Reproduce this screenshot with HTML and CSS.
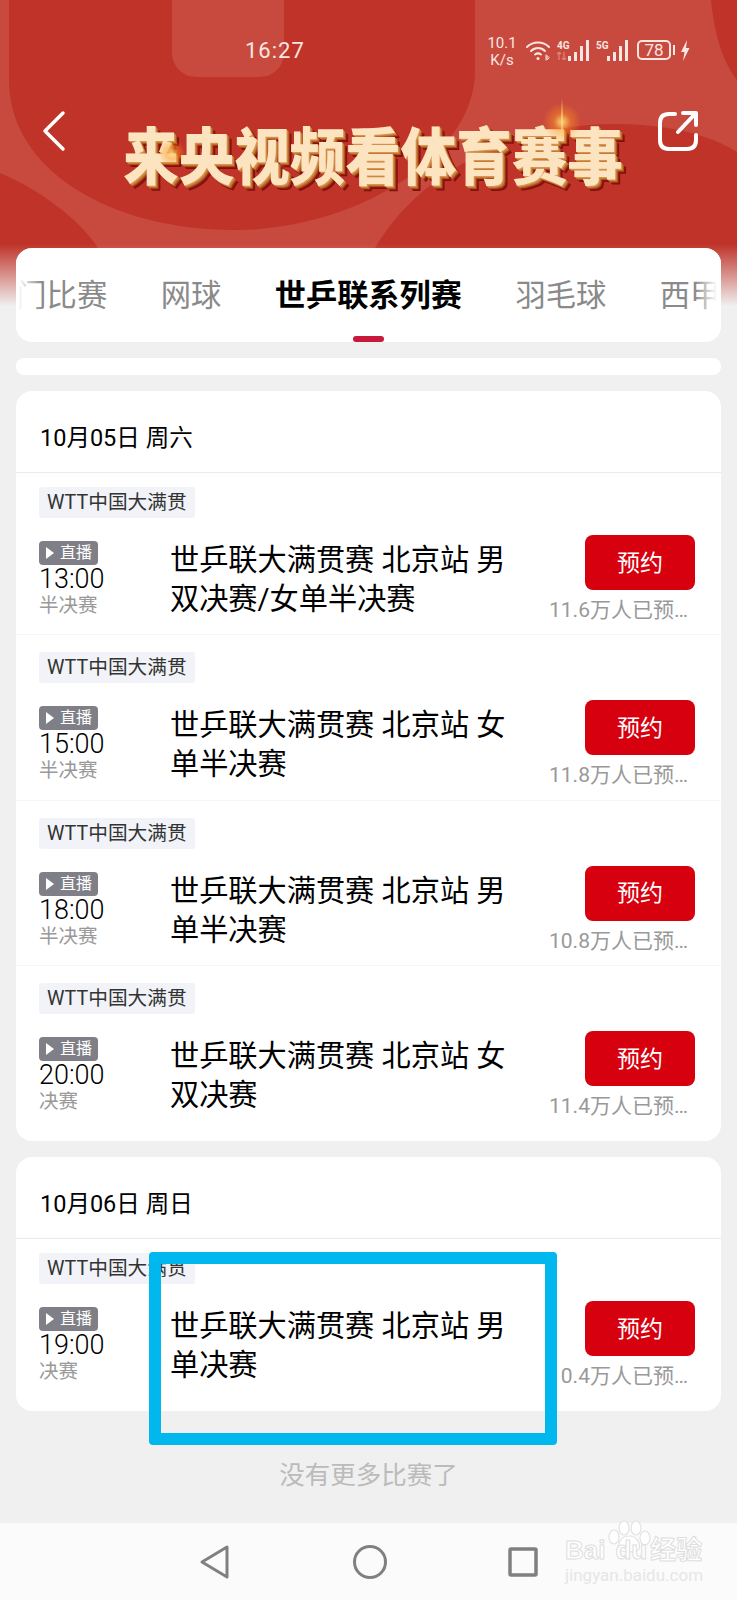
FILE: index.html
```html
<!DOCTYPE html>
<html lang="zh-CN">
<head>
    <meta charset="UTF-8">
    <meta name="viewport" content="width=device-width, initial-scale=1.0">
    <title>来央视频看体育赛事</title>
    <link rel="stylesheet" href="styles.css">
</head>
<body>

<header class="hero">
    <svg class="hero-bg" viewBox="0 0 737 306" preserveAspectRatio="none">
        <rect width="737" height="306" fill="#c8493e"/>
        <path d="M9 0V80C9 170 110 230 235 230C350 230 475 160 475 70V0Z" fill="#bf3329"/>
        <path d="M0 173C40 190 80 220 98 248V306H0Z" fill="#bf3329"/>
        <path d="M375 248C420 170 520 122 620 124C670 125 710 135 737 152V306H375Z" fill="#bf3329"/>
        <path d="M711 0C715 40 725 65 737 80V0Z" fill="#bf3329"/>
        <rect x="172" y="-30" width="112" height="107" rx="24" fill="#c8493e"/>
    </svg>
    <div class="hero-fade"></div>

    <div class="status-bar">
        <span class="clock">16:27</span>
        <div class="speed">10.1<br>K/s</div>
        <svg class="ic-wifi" width="25" height="21" viewBox="0 0 25 21" fill="none" stroke="#f8e6e2" stroke-width="2" stroke-linecap="round">
            <path d="M1 7C7 1 17 1 23 7"/>
            <path d="M5 11C9 7 15 7 19 11"/>
            <path d="M9 14.500C11 13 13 13 15 14.500"/>
            <circle cx="12" cy="18.500" r="1.500" fill="#f8e6e2" stroke="none"/>
            <path d="M20 15V20M23 17.500L21 15.500V19.500Z" stroke-width="1"/>
        </svg>
        <div class="net">
            <div class="net-type">
                <span class="net-label">4G</span>
                <svg class="net-arrows" width="10" height="8" viewBox="0 0 10 8" fill="none" stroke="#f8e6e2" stroke-width="1.200"><path d="M2 0V8M0 2L2 0L4 2M7 0V8M5 6L7 8L9 6"/></svg>
            </div>
            <svg width="22" height="21" viewBox="0 0 22 21" fill="#f8e6e2"><rect x="0" y="16" width="3" height="5"/><rect x="6" y="12" width="3" height="9"/><rect x="12" y="6" width="3" height="15"/><rect x="18" y="0" width="3" height="21"/></svg>
        </div>
        <div class="net">
            <div class="net-type">
                <span class="net-label">5G</span>
            </div>
            <svg width="22" height="21" viewBox="0 0 22 21" fill="#f8e6e2"><rect x="0" y="16" width="3" height="5"/><rect x="6" y="12" width="3" height="9"/><rect x="12" y="6" width="3" height="15"/><rect x="18" y="0" width="3" height="21"/></svg>
        </div>
        <div class="battery">78</div>
        <span class="battery-cap"></span>
        <svg width="10" height="21" viewBox="0 0 10 21" fill="#f8e6e2"><path d="M7 0L1 12H4.500L3 21L9.500 8H6Z"/></svg>
    </div>

    <div class="title-bar">
        <svg class="ic-back" width="26" height="42" viewBox="0 0 26 42" fill="none" stroke="#fff" stroke-width="3.500" stroke-linecap="round" stroke-linejoin="round"><path d="M22 3L4 21L22 39"/></svg>
        <h1 class="banner">来央视频看体育赛事</h1>
        <svg class="ic-share" width="42" height="42" viewBox="0 0 42 42" fill="none" stroke="#fff" stroke-width="4" stroke-linecap="round" stroke-linejoin="round">
            <path d="M18 4H12C6 4 3 7 3 13V30C3 36 6 39 12 39H30C36 39 39 36 39 30V25"/>
            <path d="M21 22L38 4M26 3H39V15"/>
        </svg>
    </div>
    <span class="glint glint-a"></span>
    <span class="glint glint-b"></span>
</header>

<nav class="tabs">
    <div class="tab-strip">
        <span class="tab">热门比赛</span>
        <span class="tab">网球</span>
        <span class="tab tab-active">世乒联系列赛</span>
        <span class="tab">羽毛球</span>
        <span class="tab">西甲联赛</span>
    </div>
    <span class="tab-mark"></span>
</nav>

<div class="card card-stub"></div>

<section class="card">
    <div class="day">10月05日 周六</div>

    <div class="match">
        <span class="tag">WTT中国大满贯</span>
        <div class="match-body">
            <div class="when">
                <span class="live"><i class="live-arrow"></i>直播</span>
                <span class="time">13:00</span>
                <span class="stage">半决赛</span>
            </div>
            <div class="match-title">世乒联大满贯赛 北京站 男双决赛/女单半决赛</div>
            <div class="action">
                <button class="book">预约</button>
                <span class="count">11.6万人已预约</span>
            </div>
        </div>
    </div>

    <div class="match">
        <span class="tag">WTT中国大满贯</span>
        <div class="match-body">
            <div class="when">
                <span class="live"><i class="live-arrow"></i>直播</span>
                <span class="time">15:00</span>
                <span class="stage">半决赛</span>
            </div>
            <div class="match-title">世乒联大满贯赛 北京站 女单半决赛</div>
            <div class="action">
                <button class="book">预约</button>
                <span class="count">11.8万人已预约</span>
            </div>
        </div>
    </div>

    <div class="match">
        <span class="tag">WTT中国大满贯</span>
        <div class="match-body">
            <div class="when">
                <span class="live"><i class="live-arrow"></i>直播</span>
                <span class="time">18:00</span>
                <span class="stage">半决赛</span>
            </div>
            <div class="match-title">世乒联大满贯赛 北京站 男单半决赛</div>
            <div class="action">
                <button class="book">预约</button>
                <span class="count">10.8万人已预约</span>
            </div>
        </div>
    </div>

    <div class="match match-last">
        <span class="tag">WTT中国大满贯</span>
        <div class="match-body">
            <div class="when">
                <span class="live"><i class="live-arrow"></i>直播</span>
                <span class="time">20:00</span>
                <span class="stage">决赛</span>
            </div>
            <div class="match-title">世乒联大满贯赛 北京站 女双决赛</div>
            <div class="action">
                <button class="book">预约</button>
                <span class="count">11.4万人已预约</span>
            </div>
        </div>
    </div>
</section>

<section class="card">
    <div class="day">10月06日 周日</div>

    <div class="match match-last">
        <span class="tag">WTT中国大满贯</span>
        <div class="match-body">
            <div class="when">
                <span class="live"><i class="live-arrow"></i>直播</span>
                <span class="time">19:00</span>
                <span class="stage">决赛</span>
            </div>
            <div class="match-title">世乒联大满贯赛 北京站 男单决赛</div>
            <div class="action">
                <button class="book">预约</button>
                <span class="count">10.4万人已预约</span>
            </div>
        </div>
    </div>
</section>

<p class="no-more">没有更多比赛了</p>

<footer class="nav-bar">
    <svg class="nav-back" width="32" height="36" viewBox="0 0 32 36" fill="none" stroke="#808080" stroke-width="3" stroke-linejoin="round"><path d="M28 3V33L3 18Z"/></svg>
    <svg width="36" height="36" viewBox="0 0 36 36" fill="none" stroke="#808080" stroke-width="3"><circle cx="18" cy="18" r="15.500"/></svg>
    <svg width="32" height="32" viewBox="0 0 32 32" fill="none" stroke="#808080" stroke-width="3.500" stroke-linejoin="round"><rect x="3" y="3" width="26" height="26" rx="1"/></svg>
</footer>

<!-- annotation drawn over the screenshot -->
<div class="highlight"></div>

<div class="watermark">
    <svg class="paw" width="46" height="34" viewBox="0 0 46 34" fill="#fff" stroke="#e2e2e2" stroke-width="1.200">
        <ellipse cx="8" cy="17" rx="5" ry="7"/>
        <ellipse cx="18" cy="8" rx="5" ry="7"/>
        <ellipse cx="30" cy="8" rx="5" ry="7"/>
        <ellipse cx="39" cy="18" rx="5" ry="7"/>
        <path d="M23 16C31 16 35 24 33 29C30 33 16 33 13 29C11 24 15 16 23 16Z"/>
    </svg>
    <div class="wm-name">Bai<span class="wm-du">du</span>经验</div>
    <div class="wm-url">jingyan.baidu.com</div>
</div>

</body>
</html>
```

FILE: styles.css
```css
* {
    box-sizing: border-box;
}

body {
    position: relative;
    display: flex;
    flex-direction: column;
    width: 737px;
    height: 1600px;
    margin: 0;
    overflow: hidden;
    background-color: #f0f0f0;
    color: #000;
    font-family: Roboto, "Noto Sans CJK SC", sans-serif;
}

/* header */
.hero {
    position: relative;
    height: 306px;
    margin-bottom: -58px;
    flex-shrink: 0;
    overflow: hidden;
}

.hero-bg {
    position: absolute;
    top: 0;
    left: 0;
    width: 737px;
    height: 306px;
}

.hero-fade {
    position: absolute;
    left: 0;
    right: 0;
    bottom: 0;
    height: 62px;
    background: linear-gradient(rgba(240, 240, 240, 0), #f0f0f0);
}

.status-bar {
    position: relative;
    display: flex;
    align-items: center;
    height: 42px;
    margin-top: 29px;
    padding-left: 245px;
    color: #f8e6e2;
}

.clock {
    width: 243px;
    font-size: 22px;
    letter-spacing: 1px;
}

.speed {
    width: 38px;
    margin-left: -5px;
    padding-top: 4px;
    font-size: 15px;
    line-height: 17px;
    text-align: center;
}

.ic-wifi {
    margin-left: 5px;
}

.net {
    display: flex;
    align-items: flex-start;
    margin-left: 6px;
}

.net-type {
    display: flex;
    flex-direction: column;
    width: 11px;
}

.net-label {
    font-size: 10px;
    font-weight: 700;
    line-height: 11px;
}

.net-arrows {
    margin-top: 1px;
    opacity: 0.4;
}

.battery {
    width: 34px;
    height: 20px;
    margin-left: 8px;
    border: 2px solid #f8e6e2;
    border-radius: 5px;
    font-size: 17px;
    line-height: 16px;
    text-align: center;
}

.battery-cap {
    width: 2px;
    height: 10px;
    margin: 0 5px 0 2px;
    background-color: #f8e6e2;
}

.title-bar {
    position: relative;
    display: flex;
    align-items: center;
    height: 72px;
    margin-top: 46px;
    padding: 0 38px 0 41px;
}

.ic-back,
.ic-share {
    align-self: flex-start;
    margin-top: -7px;
}

.banner {
    flex: 1;
    margin: 0;
    padding-left: 22px;
    color: #fce4c0;
    font-family: "Noto Sans CJK SC", sans-serif;
    font-size: 55.500px;
    font-weight: 900;
    line-height: 72px;
    text-align: center;
    white-space: nowrap;
    transform: scaleY(1.12);
    text-shadow: 1px 1px 0 #d9954f, 2px 2px 0 #c57a35, 3px 3px 0 #a8501f, 4px 4px 0 #96140f, 5px 5px 0 #7c120e;
}

.glint {
    position: absolute;
    border-radius: 50%;
    background: radial-gradient(rgba(255, 226, 130, 0.9), rgba(255, 150, 30, 0.45) 30%, rgba(255, 130, 30, 0) 68%);
}

.glint-a {
    top: 102px;
    left: 542px;
    width: 40px;
    height: 40px;
}

.glint-a::after {
    content: "";
    position: absolute;
    top: -4px;
    left: 19px;
    width: 2px;
    height: 48px;
    background: linear-gradient(rgba(255, 190, 80, 0), rgba(255, 210, 110, 0.9), rgba(255, 190, 80, 0));
}

.glint-b {
    top: 139px;
    left: 158px;
    width: 28px;
    height: 28px;
}

/* tab switcher */
.tabs {
    position: relative;
    height: 94px;
    margin: 0 16px;
    flex-shrink: 0;
    overflow: hidden;
    border-radius: 16px;
    background-color: #fff;
}

.tab-strip {
    display: flex;
    gap: 53.500px;
    margin-left: -30px;
    padding-top: 24px;
    white-space: nowrap;
}

.tab {
    flex-shrink: 0;
    color: #8a8a8a;
    font-family: "Noto Sans CJK SC", sans-serif;
    font-size: 30.300px;
    line-height: 42px;
}

.tab-active {
    color: #000;
    font-size: 31.200px;
    font-weight: 700;
}

.tabs::before,
.tabs::after {
    content: "";
    position: absolute;
    top: 0;
    bottom: 0;
    z-index: 1;
    width: 26px;
}

.tabs::before {
    left: 0;
    background: linear-gradient(to right, #fff 8%, rgba(255, 255, 255, 0));
}

.tabs::after {
    right: 0;
    background: linear-gradient(to left, #fff 15%, rgba(255, 255, 255, 0));
}

.tab-mark {
    position: absolute;
    left: 337px;
    bottom: 0;
    width: 31px;
    height: 6px;
    border-radius: 3px;
    background-color: #c8193c;
}

/* match cards */
.card {
    margin: 16px 16px 0;
    flex-shrink: 0;
    border-radius: 16px;
    background-color: #fff;
}

.card-stub {
    height: 17px;
    border-radius: 8px;
}

.day {
    height: 82px;
    padding: 30px 0 0 24px;
    border-bottom: 1px solid #ebebeb;
    font-size: 23.500px;
    line-height: 34px;
}

.match {
    height: 162.400px;
    margin-bottom: 3px;
    padding: 14px 26px 0 23px;
    border-bottom: 1px solid #f6f6f6;
}

.match-last {
    height: 172px;
    margin-bottom: 0;
    border-bottom: 0;
}

.tag {
    display: inline-block;
    height: 31px;
    padding: 0 8px;
    border-radius: 3px;
    background-color: #f1f3f8;
    color: #333;
    font-size: 19.700px;
    line-height: 31px;
}

.match-body {
    display: flex;
    margin-top: 17px;
}

.when {
    display: flex;
    flex-direction: column;
    align-items: flex-start;
    width: 131px;
    padding-top: 6px;
}

.live {
    display: flex;
    align-items: center;
    width: 59px;
    height: 24px;
    padding-left: 7px;
    border-radius: 4px;
    background-color: #7f8087;
    color: #fff;
    font-size: 16px;
    line-height: 24px;
}

.live-arrow {
    width: 0;
    height: 0;
    margin-right: 6px;
    border-top: 6px solid transparent;
    border-bottom: 6px solid transparent;
    border-left: 8px solid #fff;
}

.time {
    font-size: 27px;
    font-weight: 300;
    line-height: 28px;
}

.stage {
    color: #999;
    font-size: 19.500px;
    line-height: 26px;
}

.match-title {
    width: 345px;
    padding-top: 6px;
    font-size: 29.200px;
    line-height: 39px;
}

.action {
    display: flex;
    flex: 1;
    flex-direction: column;
    align-items: flex-end;
    min-width: 0;
}

.book {
    width: 110px;
    height: 55px;
    flex-shrink: 0;
    padding: 0 0 4px;
    border: none;
    border-radius: 8px;
    background-color: #d7000f;
    color: #fff;
    font-family: "Noto Sans CJK SC", sans-serif;
    font-size: 23px;
}

.count {
    width: 140px;
    margin: 5px 6px 0 0;
    overflow: hidden;
    color: #999;
    font-size: 21px;
    line-height: 30px;
    text-overflow: ellipsis;
    white-space: nowrap;
}

.no-more {
    margin: 44px 0 0;
    color: #bbb;
    font-family: "Noto Sans CJK SC", sans-serif;
    font-size: 25.500px;
    line-height: 36px;
    text-align: center;
}

.nav-bar {
    display: flex;
    align-items: center;
    justify-content: center;
    gap: 119px;
    height: 77px;
    margin-top: auto;
    background-color: #fbfbfb;
}

.nav-back {
    margin-right: 2px;
}

/* overlays */
.highlight {
    position: absolute;
    top: 1252px;
    left: 149px;
    width: 408px;
    height: 193px;
    border: 12px solid #00b7ee;
    border-radius: 4px;
}

.watermark {
    position: absolute;
    top: 1520px;
    left: 565px;
    width: 136px;
    color: #fff;
}

.paw {
    position: absolute;
    top: 0;
    left: 41px;
}

.wm-name {
    position: relative;
    margin-top: 15px;
    font-family: "Liberation Sans", "Noto Sans CJK SC", sans-serif;
    font-size: 26px;
    font-weight: 700;
    line-height: 30px;
    white-space: nowrap;
    -webkit-text-stroke: 1px #dedede;
}

.wm-du {
    margin: 0 3px 0 10px;
}

.wm-url {
    position: relative;
    color: #e6e6e6;
    font-size: 17px;
    line-height: 20px;
    white-space: nowrap;
}
```
